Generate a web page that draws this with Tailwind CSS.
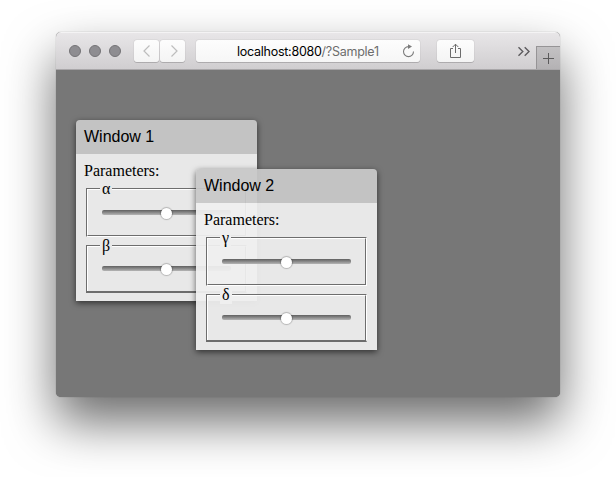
<!DOCTYPE html>
<html lang="en">
<head>
<meta charset="utf-8">
<title>localhost:8080/?Sample1</title>
<script src="https://cdn.jsdelivr.net/npm/@tailwindcss/browser@4"></script>
</head>
<body class="h-[477px] w-[616px] overflow-hidden bg-white pt-8 pl-14">
<div class="flex h-[365px] w-[504px] flex-col overflow-hidden rounded-[5px] bg-[#777777] shadow-[0_0_1px_rgba(0,0,0,0.45),0_25px_50px_rgba(0,0,0,0.58)]">
  <header class="flex h-[38px] shrink-0 items-start border-t border-b border-t-[#f4f3f4] border-b-[#a9a7a9] bg-linear-to-b from-[#e8e6e8] to-[#d0ced0] pt-1.5">
    <div class="ml-[13px] flex h-6 items-center gap-2">
      <i class="size-3 rounded-full border border-[#747376] bg-[#8e8d91]"></i>
      <i class="size-3 rounded-full border border-[#747376] bg-[#8e8d91]"></i>
      <i class="size-3 rounded-full border border-[#747376] bg-[#8e8d91]"></i>
    </div>
    <div class="ml-[13px] flex gap-px pt-px">
      <div class="flex h-[22px] w-[25px] items-center justify-center rounded-[3px] bg-linear-to-b from-[#fdfdfd] to-[#f4f4f4] shadow-[0_0_1px_rgba(0,0,0,0.35),0_1px_0_rgba(0,0,0,0.15)]">
        <svg width="12" height="14" viewBox="0 0 12 14" fill="none" stroke="#bdbdbd" stroke-width="1.2"><path d="M8.500 1.500 3 7l5.500 5.500"/></svg>
      </div>
      <div class="flex h-[22px] w-[25px] items-center justify-center rounded-[3px] bg-linear-to-b from-[#fdfdfd] to-[#f4f4f4] shadow-[0_0_1px_rgba(0,0,0,0.35),0_1px_0_rgba(0,0,0,0.15)]">
        <svg width="12" height="14" viewBox="0 0 12 14" fill="none" stroke="#bdbdbd" stroke-width="1.2"><path d="M4.500 1.500 10 7l-5.500 5.500"/></svg>
      </div>
    </div>
    <div class="mt-px ml-[11px] flex h-[22px] w-[224px] items-center rounded-[3px] bg-linear-to-b from-[#fdfdfd] to-[#f6f6f6] shadow-[0_0_1px_rgba(0,0,0,0.35),0_1px_0_rgba(0,0,0,0.15)]">
      <span class="ml-[41px] w-[142px] pt-px font-['Inter',sans-serif] text-[12.5px] leading-5 tracking-[-0.26px] whitespace-nowrap text-black">localhost:8080<span class="text-[#6c6c6c]">/?Sample1</span></span>
      <svg class="ml-[23px]" width="13" height="14" viewBox="0 0 13 14" fill="none" stroke="#7b7b7b" stroke-width="1.1"><path d="M6.500 2.600A5 5 0 1 0 11.500 7.600"/><path d="M6 .2 10 2.600 6 5Z" fill="#7b7b7b" stroke="none"/></svg>
    </div>
    <div class="mt-px ml-[17px] flex h-[22px] w-[37px] items-center justify-center rounded-[3px] bg-linear-to-b from-[#fdfdfd] to-[#f4f4f4] shadow-[0_0_1px_rgba(0,0,0,0.35),0_1px_0_rgba(0,0,0,0.15)]">
      <svg width="13" height="16" viewBox="0 0 13 16" fill="none" stroke="#6c6c6c" stroke-width="1"><path d="M4 5.500H1.500v9h10v-9H9M6.500 10V1.200M3.700 4 6.500 1.200 9.300 4"/></svg>
    </div>
    <svg class="mt-[7px] ml-[43px]" width="14" height="11" viewBox="0 0 14 11" fill="none" stroke="#5e5c5f" stroke-width="1.4"><path d="M1.500 1.200l4.300 4.300-4.300 4.300M7.700 1.200l4.300 4.300-4.300 4.300"/></svg>
    <div class="mt-[7px] ml-auto flex h-[23px] w-6 items-center justify-center border-t border-l border-[#969496] bg-linear-to-b from-[#c3c1c3] to-[#b4b2b4]">
      <svg width="11" height="11" viewBox="0 0 11 11" stroke="#5b5a5b"><path d="M0 5.500h11M5.500 0v11"/></svg>
    </div>
  </header>

  <main class="relative flex-1 bg-[#777777] font-['Liberation_Serif',serif] text-[16px] text-black">
    <section class="absolute top-[50px] left-5 h-[181px] w-[181px] rounded-t-[4px] shadow-[0_2px_6px_rgba(0,0,0,0.6)]">
      <h2 class="h-[34px] rounded-t-[4px] bg-[#c8c8c8]/94 pl-2 font-['Liberation_Sans',sans-serif] leading-[33px]">Window 1</h2>
      <div class="h-[147px] bg-[#efefef]/94">
        <p class="h-[34px] pl-2 leading-[34px]">Parameters:</p>
        <div class="relative ml-2.5 h-[49px] w-[161px] border border-[#6d6d6d] border-r-white border-b-white">
          <div class="h-full border border-white border-r-[#6d6d6d] border-b-[#6d6d6d] pt-5 pl-[14px]">
            <div class="relative h-[5px] w-[129px] rounded-[2px] bg-linear-to-b from-[#606060] to-[#b5b5b5]"><i class="absolute top-[-2px] left-[59px] size-[11px] rounded-full bg-white shadow-[0_0_1px_1px_rgba(0,0,0,0.22)]"></i></div>
          </div>
          <span class="absolute top-[-9px] left-[13px] bg-[#e8e8e8] px-0.5 leading-[18px]">α</span>
        </div>
        <div class="relative mt-2 ml-2.5 h-[48px] w-[161px] border-t border-l border-r border-b-2 border-[#6d6d6d] border-r-white">
          <div class="h-full border-t border-l border-r border-white border-r-[#6d6d6d] pt-[19px] pl-[14px]">
            <div class="relative h-[5px] w-[129px] rounded-[2px] bg-linear-to-b from-[#606060] to-[#b5b5b5]"><i class="absolute top-[-2px] left-[59px] size-[11px] rounded-full bg-white shadow-[0_0_1px_1px_rgba(0,0,0,0.22)]"></i></div>
          </div>
          <span class="absolute top-[-9px] left-[13px] bg-[#e8e8e8] px-0.5 leading-[18px]">β</span>
        </div>
      </div>
    </section>

    <section class="absolute top-[99px] left-[140px] h-[181px] w-[181px] rounded-t-[4px] shadow-[0_2px_6px_rgba(0,0,0,0.6)]">
      <h2 class="h-[34px] rounded-t-[4px] bg-[#c8c8c8]/94 pl-2 font-['Liberation_Sans',sans-serif] leading-[33px]">Window 2</h2>
      <div class="h-[147px] bg-[#efefef]/94">
        <p class="h-[34px] pl-2 leading-[34px]">Parameters:</p>
        <div class="relative ml-2.5 h-[49px] w-[161px] border border-[#6d6d6d] border-r-white border-b-white">
          <div class="h-full border border-white border-r-[#6d6d6d] border-b-[#6d6d6d] pt-5 pl-[14px]">
            <div class="relative h-[5px] w-[129px] rounded-[2px] bg-linear-to-b from-[#606060] to-[#b5b5b5]"><i class="absolute top-[-2px] left-[59px] size-[11px] rounded-full bg-white shadow-[0_0_1px_1px_rgba(0,0,0,0.22)]"></i></div>
          </div>
          <span class="absolute top-[-9px] left-[13px] bg-[#efefef] px-0.5 leading-[18px]">γ</span>
        </div>
        <div class="relative mt-2 ml-2.5 h-[48px] w-[161px] border-t border-l border-r border-b-2 border-[#6d6d6d] border-r-white">
          <div class="h-full border-t border-l border-r border-white border-r-[#6d6d6d] pt-[19px] pl-[14px]">
            <div class="relative h-[5px] w-[129px] rounded-[2px] bg-linear-to-b from-[#606060] to-[#b5b5b5]"><i class="absolute top-[-2px] left-[59px] size-[11px] rounded-full bg-white shadow-[0_0_1px_1px_rgba(0,0,0,0.22)]"></i></div>
          </div>
          <span class="absolute top-[-9px] left-[13px] bg-[#efefef] px-0.5 leading-[18px]">δ</span>
        </div>
      </div>
    </section>
  </main>
</div>
</body>
</html>
